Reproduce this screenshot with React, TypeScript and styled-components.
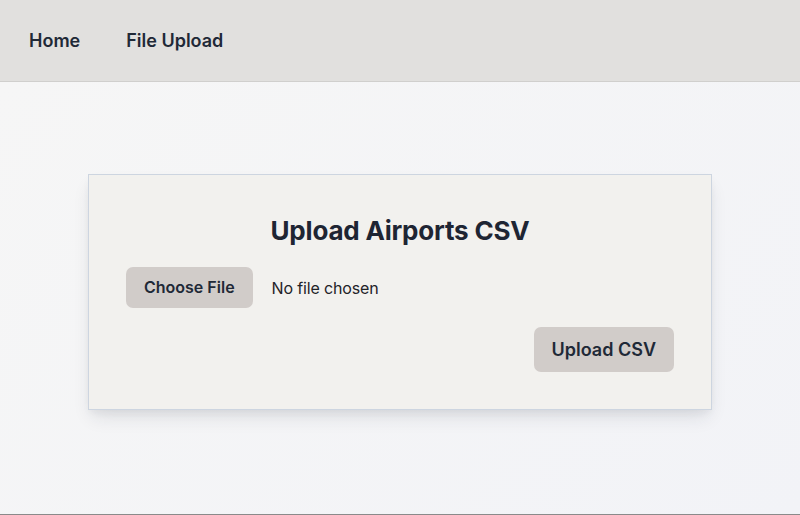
import React from "react";
import styled, { createGlobalStyle } from "styled-components";

const Global = createGlobalStyle`
  * { box-sizing: border-box; }
  html, body { margin: 0; padding: 0; }
  body {
    font-family: Inter, "Noto Sans", "Liberation Sans", sans-serif;
    color: #1f2937;
    background: #f3f4f6;
  }
`;

const Page = styled.div`
  min-height: 515px;
  display: flex;
  flex-direction: column;
`;

const Header = styled.header`
  height: 82px;
  background: #e1e0de;
  border-bottom: 1px solid #d0cfcd;
  display: flex;
  align-items: center;
  padding: 0 29px;
  gap: 46px;
`;

const NavLink = styled.a`
  font-size: 18px;
  font-weight: 600;
  color: #1f2937;
  text-decoration: none;
  line-height: 24px;
`;

const Main = styled.main`
  flex: 1;
  display: flex;
  justify-content: center;
  align-items: flex-start;
  padding-top: 92px;
  background: linear-gradient(135deg, #f6f6f6 0%, #f2f3f7 100%);
  border-bottom: 1px solid #8a8a8a;
`;

const Card = styled.section`
  width: 624px;
  background: #f2f1ee;
  border: 1px solid #cdd5e0;
  box-shadow: 0 10px 18px -4px rgba(30, 41, 59, 0.12), 0 4px 8px -2px rgba(30, 41, 59, 0.06);
  padding: 38px 37px 37px;
  display: flex;
  flex-direction: column;
`;

const Title = styled.h1`
  margin: 0 0 18px;
  font-size: 26px;
  line-height: 36px;
  font-weight: 700;
  letter-spacing: -0.2px;
  text-align: center;
  color: #1e2533;
`;

const FileRow = styled.div`
  display: flex;
  align-items: center;
  gap: 19px;
`;

const Button = styled.button<{ $size?: "md" | "lg" }>`
  font-family: inherit;
  border: none;
  background: #d1ccc9;
  color: #1f2937;
  font-weight: 600;
  border-radius: 7px;
  cursor: pointer;
  font-size: ${(p) => (p.$size === "lg" ? "18px" : "16px")};
  line-height: ${(p) => (p.$size === "lg" ? "27px" : "21px")};
  padding: ${(p) => (p.$size === "lg" ? "9px 18px" : "10px 18px")};
`;

const FileName = styled.span`
  font-size: 16px;
  letter-spacing: -0.15px;
  color: #1f2328;
`;

const Actions = styled.div`
  display: flex;
  justify-content: flex-end;
  margin-top: 19px;
`;

export default function App() {
  return (
    <Page>
      <Global />
      <Header>
        <NavLink href="#">Home</NavLink>
        <NavLink href="#">File Upload</NavLink>
      </Header>
      <Main>
        <Card>
          <Title>Upload Airports CSV</Title>
          <FileRow>
            <Button type="button">Choose File</Button>
            <FileName>No file chosen</FileName>
          </FileRow>
          <Actions>
            <Button type="button" $size="lg">Upload CSV</Button>
          </Actions>
        </Card>
      </Main>
    </Page>
  );
}
